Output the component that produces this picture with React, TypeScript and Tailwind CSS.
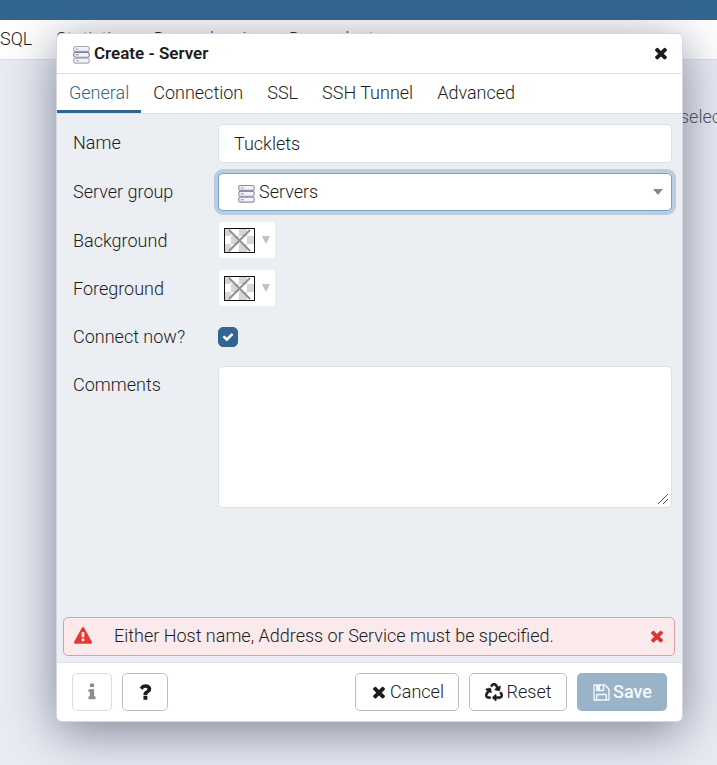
import { useState, type ReactNode } from "react";
import { FaRecycle } from "react-icons/fa";

const glyphs = {
  times:
    "M1490 1322q0 40-28 68l-136 136q-28 28-68 28t-68-28l-294-294-294 294q-28 28-68 28t-68-28l-136-136q-28-28-28-68t28-68l294-294-294-294q-28-28-28-68t28-68l136-136q28-28 68-28t68 28l294 294 294-294q28-28 68-28t68 28l136 136q28 28 28 68t-28 68l-294 294 294 294q28 28 28 68z",
  check:
    "M1671 566q0 40-28 68l-724 724-136 136q-28 28-68 28t-68-28l-136-136-362-362q-28-28-28-68t28-68l136-136q28-28 68-28t68 28l294 295 656-657q28-28 68-28t68 28l136 136q28 28 28 68z",
  info: "M1216 1344v128q0 26-19 45t-45 19h-512q-26 0-45-19t-19-45v-128q0-26 19-45t45-19h64v-384h-64q-26 0-45-19t-19-45v-128q0-26 19-45t45-19h384q26 0 45 19t19 45v576h64q26 0 45 19t19 45zm-128-1152v192q0 26-19 45t-45 19h-256q-26 0-45-19t-19-45v-192q0-26 19-45t45-19h256q26 0 45 19t19 45z",
  question:
    "M1088 1256v240q0 16-12 28t-28 12h-240q-16 0-28-12t-12-28v-240q0-16 12-28t28-12h240q16 0 28 12t12 28zm316-600q0 54-15.5 101t-35 76.5-55 59.5-57.5 43.5-61 35.5q-41 23-68.5 65t-27.5 67q0 17-12 32.5t-28 15.5h-240q-15 0-25.5-18.5t-10.5-37.5v-45q0-83 65-156.5t143-108.5q59-27 84-56t25-76q0-42-46.5-74t-107.5-32q-65 0-108 29-35 25-107 115-13 16-31 16-12 0-25-8l-164-125q-13-10-15.5-25t5.5-28q160-266 464-266 80 0 161 31t146 83 106 127.5 41 158.5z",
  warning:
    "M1024 1375v-190q0-14-9.5-23.5t-22.5-9.5h-192q-13 0-22.5 9.5t-9.5 23.5v190q0 14 9.5 23.5t22.5 9.5h192q13 0 22.5-9.5t9.5-23.5zm-2-374l18-459q0-12-10-19-13-11-24-11h-220q-11 0-24 11-10 7-10 21l17 457q0 10 10 16.5t24 6.5h185q14 0 23.5-6.5t10.5-16.5zm-14-934l768 1408q35 63-2 126-17 29-46.5 46t-63.5 17h-1536q-34 0-63.5-17t-46.5-46q-37-63-2-126l768-1408q17-31 47-49t65-18 65 18 47 49z",
  save: "M512 1536h768v-384h-768v384zm896 0h128v-896q0-14-10-38.5t-20-34.5l-281-281q-10-10-34-20t-39-10v416q0 40-28 68t-68 28h-576q-40 0-68-28t-28-68v-416h-128v1280h128v-416q0-40 28-68t68-28h832q40 0 68 28t28 68v416zm-384-928v-320q0-13-9.5-22.5t-22.5-9.5h-192q-13 0-22.5 9.5t-9.5 22.5v320q0 13 9.5 22.5t22.5 9.5h192q13 0 22.5-9.5t9.5-22.5zm640 32v928q0 40-28 68t-68 28h-1344q-40 0-68-28t-28-68v-1344q0-40 28-68t68-28h928q40 0 88 20t76 48l280 280q28 28 48 76t20 88z",
};

function Glyph({ name, className }: { name: keyof typeof glyphs; className: string }) {
  return (
    <svg viewBox="0 0 1792 1792" fill="currentColor" aria-hidden="true" className={className}>
      <path d={glyphs[name]} />
    </svg>
  );
}

function ServerIcon({ muted, className }: { muted?: boolean; className: string }) {
  const edge = muted ? "#a9a7ac" : "#8e8ca6";
  const middle = muted ? "#85809a" : "#8e8ca6";
  return (
    <svg viewBox="0 0 18 20" fill="none" aria-hidden="true" className={className}>
      {[1, 7.2, 13.4].map((y, i) => (
        <g key={y} stroke={i === 1 ? middle : edge}>
          <rect x="0.8" y={y} width="16.4" height="5.2" rx="1.8" fill="#f3f2f6" strokeWidth="1.2" />
          <path d={`M3 ${y + 2.6}h3`} strokeWidth="1.1" />
        </g>
      ))}
    </svg>
  );
}

function Field({ id, label, children }: { id: string; label: string; children: ReactNode }) {
  return (
    <div className="flex items-start">
      <label htmlFor={id} className="w-[145px] shrink-0 leading-[38px]">
        {label}
      </label>
      {children}
    </div>
  );
}

function ColorPicker({ id }: { id: string }) {
  return (
    <div className="flex h-[38px] items-start pl-px">
      <button id={id} type="button" className="flex h-9 w-14 items-center gap-[7px] rounded-[3px] bg-white pl-[5px]">
        <svg viewBox="0 0 31 25" aria-hidden="true" className="h-[25px] w-[31px]">
          <rect width="31" height="25" fill="#fff" />
          <path d="M1 1h6v7H1zM15 1h8v7h-8zM7 8h8v8H7zM23 8h7v8h-7zM1 16h6v8H1zM15 16h8v8h-8z" fill="#d6d6d6" />
          <path d="M5 2l21 21M26 2L5 23" stroke="#929292" strokeWidth="2.2" />
          <rect x="0.5" y="0.5" width="30" height="24" fill="none" stroke="#111" />
        </svg>
        <svg viewBox="0 0 8 8" aria-hidden="true" className="h-2 w-2">
          <path d="M0 0h8L4 8z" fill="#bfbfcd" />
        </svg>
      </button>
    </div>
  );
}

const tabs = ["General", "Connection", "SSL", "SSH Tunnel", "Advanced"];
const footerButton = "flex h-[38px] items-center rounded-[5px] border border-[#b9bec8] bg-white";

export default function App() {
  const [active, setActive] = useState("General");
  const [name, setName] = useState("Tucklets");
  const [connect, setConnect] = useState(true);

  return (
    <div className="relative min-h-screen overflow-hidden bg-[#e8ecf4] font-['Roboto',sans-serif] text-lg leading-6 font-[350] text-[#1c1c1c]">
      <div className="h-5 bg-[#326690]" />
      <nav className="flex h-10 items-center gap-6 overflow-hidden border-b border-[#dde0e6] bg-white pb-0.5 whitespace-nowrap">
        <a href="#sql">SQL</a>
        <a href="#statistics">Statistics</a>
        <a href="#dependencies">Dependencies</a>
        <a href="#dependents">Dependents</a>
      </nav>
      <main className="flex justify-end pt-[45px] text-[#4a4d55]">
        <p className="w-[37px] whitespace-nowrap">selected</p>
      </main>

      <div className="absolute inset-0 flex items-start pt-[33px] pr-[34px] pl-14">
        <section
          role="dialog"
          aria-label="Create - Server"
          className="flex min-h-[689px] flex-1 flex-col overflow-hidden rounded-md border border-[#d5d8e1] bg-[#ebeef3] shadow-[0_10px_50px_rgba(70,75,98,0.65)]"
        >
          <header className="flex h-10 items-center border-b border-[#dde0e6] bg-white pr-3 pb-px pl-4">
            <ServerIcon muted className="mt-[3px] h-5 w-[17px]" />
            <h1 className="ml-1 flex-1 text-[17px] font-semibold">Create - Server</h1>
            <button type="button" aria-label="Close">
              <Glyph name="times" className="h-[18px] w-[18px]" />
            </button>
          </header>

          <div role="tablist" className="flex h-10 border-b border-[#dde0e6] bg-white">
            {tabs.map((t) => (
              <button
                key={t}
                type="button"
                role="tab"
                aria-selected={t === active}
                onClick={() => setActive(t)}
                className={`border-b-[3px] px-3 pt-0.5 ${t === active ? "border-[#326690] text-[#326690]" : "border-transparent"}`}
              >
                {t}
              </button>
            ))}
          </div>

          <form className="flex flex-col gap-[10px] pt-[10px] pr-[10px] pl-4">
            <Field id="name" label="Name">
              <input
                id="name"
                value={name}
                onChange={(e) => setName(e.target.value)}
                className="h-[39px] min-w-0 flex-1 rounded-[5px] border border-[#dde0e6] bg-white px-[15px] outline-none"
              />
            </Field>
            <Field id="group" label="Server group">
              <div className="relative h-[39px] flex-1">
                <select
                  id="group"
                  className="block h-[38px] w-full appearance-none rounded-[5px] border border-[#7aa0c0] bg-white pl-10 shadow-[0_0_0_4px_#b8cde0] outline-none"
                >
                  <option>Servers</option>
                </select>
                <ServerIcon className="pointer-events-none absolute top-[11px] left-5 h-5 w-[17px]" />
                <svg viewBox="0 0 10 6" aria-hidden="true" className="pointer-events-none absolute top-4 right-[9px] h-1.5 w-[10px]">
                  <path d="M0 0h10L5 6z" fill="#888" />
                </svg>
              </div>
            </Field>
            <Field id="bg" label="Background">
              <ColorPicker id="bg" />
            </Field>
            <Field id="fg" label="Foreground">
              <ColorPicker id="fg" />
            </Field>
            <Field id="connect" label="Connect now?">
              <div className="relative flex h-[38px] items-center">
                <input
                  id="connect"
                  type="checkbox"
                  checked={connect}
                  onChange={(e) => setConnect(e.target.checked)}
                  className="h-5 w-5 appearance-none rounded-[5px] border border-[#326690] bg-white checked:bg-[#326690]"
                />
                <Glyph name="check" className="pointer-events-none absolute left-1 h-3 w-3 text-white" />
              </div>
            </Field>
            <Field id="comments" label="Comments">
              <div className="relative flex flex-1">
                <textarea
                  id="comments"
                  className="h-[142px] min-w-0 flex-1 resize-y rounded-[5px] border border-[#dde0e6] bg-white px-[15px] py-2 outline-none"
                />
                <svg viewBox="0 0 14 14" aria-hidden="true" className="pointer-events-none absolute right-0.5 bottom-0.5 h-3.5 w-3.5 bg-white">
                  <path d="M2 12L12 2M7 12l5-5" stroke="#555" strokeWidth="1" />
                </svg>
              </div>
            </Field>
          </form>

          <div
            role="alert"
            className="mt-auto mr-[7px] mb-1.5 ml-1.5 flex h-[39px] items-center rounded-[5px] border border-[#e59aa0] bg-[#faeaeb] pr-2 pb-px pl-[10px]"
          >
            <Glyph name="warning" className="h-[18px] w-[18px] text-[#e53935]" />
            <p className="ml-[22px] flex-1">Either Host name, Address or Service must be specified.</p>
            <button type="button" aria-label="Dismiss" className="text-[#dc3535]">
              <Glyph name="times" className="h-[18px] w-[18px]" />
            </button>
          </div>

          <footer className="flex h-[59px] items-center gap-[10px] border-t border-[#dde0e6] bg-white px-[15px]">
            <button type="button" disabled aria-label="Info" className={`${footerButton} w-10 justify-center opacity-50`}>
              <Glyph name="info" className="h-5 w-5" />
            </button>
            <button type="button" aria-label="Help" className={`${footerButton} mr-auto w-[46px] justify-center`}>
              <Glyph name="question" className="h-[22px] w-[22px]" />
            </button>
            <button type="button" className={`${footerButton} w-[104px] justify-center gap-0.5`}>
              <Glyph name="times" className="h-[18px] w-[18px]" />
              Cancel
            </button>
            <button type="button" className={`${footerButton} w-[98px] justify-center gap-1`}>
              <FaRecycle className="h-[18px] w-[18px]" stroke="currentColor" strokeWidth="12" />
              Reset
            </button>
            <button
              type="button"
              disabled
              className="flex h-[38px] w-[90px] items-center justify-center gap-0.5 rounded-[5px] bg-[#99b3c8] font-medium text-[#f5f9fd]"
            >
              <Glyph name="save" className="h-[19px] w-[19px]" />
              Save
            </button>
          </footer>
        </section>
      </div>
    </div>
  );
}
